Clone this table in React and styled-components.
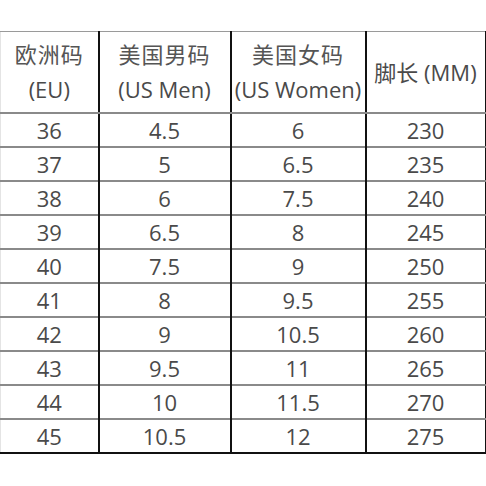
import React from "react";
import styled, { createGlobalStyle } from "styled-components";

const GlobalStyle = createGlobalStyle`
  body {
    margin: 0;
    background: #fff;
    font-family: "Open Sans", "Noto Sans CJK SC", sans-serif;
  }
`;

const Page = styled.div`
  width: 486px;
  height: 486px;
  padding-top: 31px;
  box-sizing: border-box;
`;

const Table = styled.table`
  width: 485px;
  border-collapse: collapse;
  table-layout: fixed;
  color: #4a4a4a;
  border-left: 1px solid #e4e4e4;
  border-top: 1px solid #9a9a9a;
  border-bottom: 2px solid #111;
  border-right: 2px solid #111;
`;

const HeadCell = styled.th`
  font-weight: 400;
  font-size: 22px;
  line-height: 35px;
  height: 80px;
  padding: 0;
  text-align: center;
  vertical-align: middle;
  white-space: nowrap;
  border-bottom: 2px solid #8a8a8a;
  & + & {
    border-left: 2px solid #111;
  }
`;

const Cjk = styled.div`
  letter-spacing: 1px;
  color: #555;
`;

const Row = styled.tr`
  & + & td {
    border-top: 2px solid #8a8a8a;
  }
`;

const Cell = styled.td`
  font-size: 22px;
  height: 32px;
  padding: 0;
  text-align: center;
  vertical-align: middle;
  & + & {
    border-left: 2px solid #111;
  }
`;

const columns = [
  { width: 98, title: ["欧洲码", "(EU)"] },
  { width: 132, title: ["美国男码", "(US Men)"] },
  { width: 135, title: ["美国女码", "(US Women)"] },
  { width: 120, title: ["脚长 (MM)"] },
];

const sizes = [
  ["36", "4.5", "6", "230"],
  ["37", "5", "6.5", "235"],
  ["38", "6", "7.5", "240"],
  ["39", "6.5", "8", "245"],
  ["40", "7.5", "9", "250"],
  ["41", "8", "9.5", "255"],
  ["42", "9", "10.5", "260"],
  ["43", "9.5", "11", "265"],
  ["44", "10", "11.5", "270"],
  ["45", "10.5", "12", "275"],
];

export default function App() {
  return (
    <Page>
      <GlobalStyle />
      <Table>
        <colgroup>
          {columns.map((c, i) => (
            <col key={i} style={{ width: c.width }} />
          ))}
        </colgroup>
        <thead>
          <tr>
            {columns.map((c, i) => (
              <HeadCell key={i}>
                {c.title.length > 1 ? (
                  <>
                    <Cjk>{c.title[0]}</Cjk>
                    <div>{c.title[1]}</div>
                  </>
                ) : (
                  <div>{c.title[0]}</div>
                )}
              </HeadCell>
            ))}
          </tr>
        </thead>
        <tbody>
          {sizes.map((row, i) => (
            <Row key={i}>
              {row.map((v, j) => (
                <Cell key={j}>{v}</Cell>
              ))}
            </Row>
          ))}
        </tbody>
      </Table>
    </Page>
  );
}
